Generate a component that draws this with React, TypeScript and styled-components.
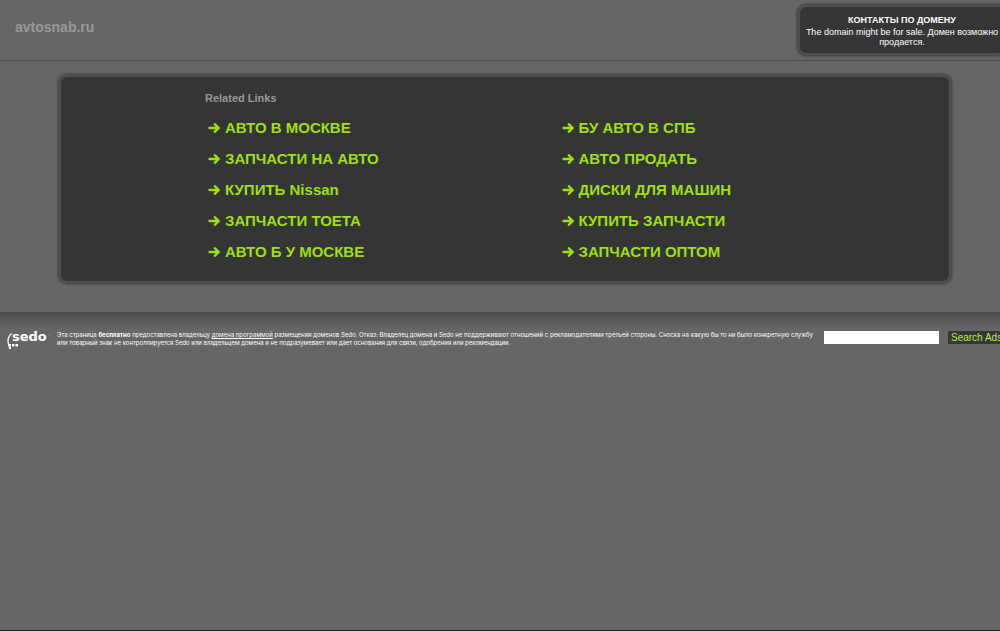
import React from "react";
import styled, { createGlobalStyle } from "styled-components";

const GlobalStyle = createGlobalStyle`
  *, *::before, *::after { box-sizing: border-box; }
  body {
    margin: 0;
    background: #666;
    color: #fff;
    font-family: "Liberation Sans", Arial, sans-serif;
    overflow-x: hidden;
  }
`;

const Page = styled.div`
  display: flex;
  flex-direction: column;
  min-height: 100vh;
  border-bottom: 1px solid #222;
  overflow: hidden;
`;

const Header = styled.header`
  display: flex;
  justify-content: space-between;
  align-items: flex-start;
  height: 61px;
  padding-left: 15px;
  border-bottom: 1px solid #4c4c4c;
`;

const DomainName = styled.h1`
  margin: 18px 0 0;
  font-size: 14px;
  line-height: 18px;
  color: #999;
`;

const Panel = styled.section`
  background: #353535;
  border: 2px solid #505050;
  border-radius: 8px;
  box-shadow: 0 0 3px 1px #3a3a3a;
`;

const ContactPanel = styled(Panel)`
  width: 208px;
  height: 50px;
  margin: 5px -6px 0 0;
  padding: 8px 2px 0;
  text-align: center;
  font-size: 9px;
  line-height: 10px;
`;

const ContactLink = styled.a`
  display: block;
  margin-bottom: 2px;
  color: #fff;
  font-weight: bold;
  text-decoration: none;
`;

const ContactText = styled.p`
  margin: 0;
`;

const LinksPanel = styled(Panel)`
  margin: 14px 49px 29px 59px;
  padding: 13px 34px 14px 144px;
`;

const LinksTitle = styled.h2`
  margin: 0 0 6px;
  font-size: 11px;
  line-height: 16px;
  color: #999;
`;

const LinkGrid = styled.ul`
  display: grid;
  grid-template-columns: 1fr 1fr;
  margin: 0;
  padding: 0 0 0 3px;
  list-style: none;
`;

const RelatedLink = styled.a`
  display: inline-flex;
  align-items: center;
  gap: 4px;
  height: 31px;
  color: #9fdf15;
  font-size: 15px;
  font-weight: bold;
  text-decoration: none;
`;

const Footer = styled.footer`
  display: flex;
  align-items: flex-start;
  padding: 18px 0 0 7px;
  background: linear-gradient(#484848, #5a5a5a 8px, #666 18px);
`;

const Logo = styled.a`
  flex: none;
  display: block;
  width: 44px;
  height: 20px;
  margin-right: 6px;
`;

const Notice = styled.p`
  flex: 1;
  margin: 1px 0 0;
  font-family: Inter, "Liberation Sans", sans-serif;
  font-size: 6px;
  line-height: 8px;

  a { color: inherit; }
`;

const SearchForm = styled.form`
  flex: none;
  display: flex;
  gap: 9px;
  margin: 1px 0 0 8px;
`;

const SearchInput = styled.input`
  width: 115px;
  height: 13px;
  padding: 0 2px;
  border: 0;
  border-radius: 0;
  background: #fff;
  font: 10px "Liberation Sans", Arial, sans-serif;
`;

const SearchButton = styled.button`
  width: 52px;
  height: 13px;
  padding: 0 0 0 3px;
  border: 0;
  background: #353535;
  color: #b9f04a;
  font: 10px/13px "Liberation Sans", Arial, sans-serif;
  text-align: left;
  white-space: nowrap;
`;

const links = [
  "АВТО В МОСКВЕ", "БУ АВТО В СПБ",
  "ЗАПЧАСТИ НА АВТО", "АВТО ПРОДАТЬ",
  "КУПИТЬ Nissan", "ДИСКИ ДЛЯ МАШИН",
  "ЗАПЧАСТИ ТОЕТА", "КУПИТЬ ЗАПЧАСТИ",
  "АВТО Б У МОСКВЕ", "ЗАПЧАСТИ ОПТОМ",
];

const Arrow = () => (
  <svg width="13" height="12" viewBox="0 0 13 12" fill="currentColor" aria-hidden="true">
    <path d="M1.5 4.800H7.800L5.900 2.900Q5.300 2 6.100 1.300T7.800 1.400L12.300 6 7.800 10.600Q6.900 11.400 6.100 10.700T5.900 9.100L7.800 7.200H1.500Q.3 7.100 .3 6T1.500 4.800Z" />
  </svg>
);

const SedoLogo = () => (
  <svg width="44" height="20" viewBox="0 0 44 20" aria-hidden="true">
    <path d="M4.6 3.500C0.6 7-.1 12 2.800 18" fill="none" stroke="#fff" strokeWidth="1.2" />
    <path d="M1.5 14h2.5v2.5h-2.5zM5 14h2.5v2.5H5zM8.500 14h2.500v2.500h-2.500zM2 17h2v2H2z" fill="#fff" />
    <text x="5" y="11" fill="#fff" fontFamily="DejaVu Sans, sans-serif" fontWeight="bold" fontSize="13">sedo</text>
    <circle cx="42.500" cy="5" r=".7" fill="#999" />
  </svg>
);

export default function App() {
  return (
    <Page>
      <GlobalStyle />
      <Header>
        <DomainName>avtosnab.ru</DomainName>
        <ContactPanel>
          <ContactLink href="#contact">КОНТАКТЫ ПО ДОМЕНУ</ContactLink>
          <ContactText>The domain might be for sale. Домен возможно продается.</ContactText>
        </ContactPanel>
      </Header>
      <main>
        <LinksPanel>
          <LinksTitle>Related Links</LinksTitle>
          <LinkGrid>
            {links.map((label) => (
              <li key={label}>
                <RelatedLink href="#search"><Arrow />{label}</RelatedLink>
              </li>
            ))}
          </LinkGrid>
        </LinksPanel>
      </main>
      <Footer>
        <Logo href="#sedo" aria-label="Sedo"><SedoLogo /></Logo>
        <Notice>
          Эта страница <b>бесплатно</b> предоставлена владельцу <a href="#program">домена программой</a> размещения доменов Sedo. Отказ: Владелец домена и Sedo не поддерживают отношений с рекламодателями третьей стороны. Сноска на какую бы то ни было конкретную службу или товарный знак не контроллируется Sedo или владельцем домена и не подразумевает или дает основания для связи, одобрения или рекомендации.
        </Notice>
        <SearchForm onSubmit={(e) => e.preventDefault()}>
          <SearchInput type="text" aria-label="Search Ads" />
          <SearchButton type="submit">Search Ads</SearchButton>
        </SearchForm>
      </Footer>
    </Page>
  );
}
